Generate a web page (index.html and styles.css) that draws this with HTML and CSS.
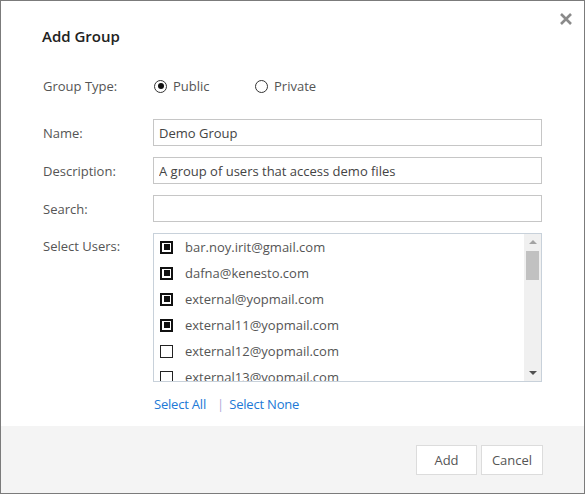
FILE: index.html
```html
<!DOCTYPE html>
<html lang="en">
<head>
    <meta charset="UTF-8">
    <title>Add Group</title>
    <link rel="stylesheet" href="styles.css">
</head>
<body>
    <div class="dialog">
        <button class="close" title="Close">
            <svg width="12" height="12" viewBox="0 0 12 12"><path d="M1 1L11 11M11 1L1 11" stroke="#8a8a8a" stroke-width="2.6" fill="none"/></svg>
        </button>

        <h2 class="title">Add Group</h2>

        <div class="form">
            <label class="lbl">Group Type:</label>
            <div class="radios">
                <span class="option"><span class="radio checked"></span>Public</span>
                <span class="option"><span class="radio"></span>Private</span>
            </div>

            <label class="lbl">Name:</label>
            <input class="field" type="text" value="Demo Group">

            <label class="lbl">Description:</label>
            <input class="field" type="text" value="A group of users that access demo files">

            <label class="lbl">Search:</label>
            <input class="field" type="text">

            <label class="lbl lbl-top">Select Users:</label>
            <div>
                <div class="users">
                    <ul class="user-list">
                        <li><span class="check checked"></span>bar.noy.irit@gmail.com</li>
                        <li><span class="check checked"></span>dafna@kenesto.com</li>
                        <li><span class="check checked"></span>external@yopmail.com</li>
                        <li><span class="check checked"></span>external11@yopmail.com</li>
                        <li><span class="check"></span>external12@yopmail.com</li>
                        <li><span class="check"></span>external13@yopmail.com</li>
                    </ul>
                    <div class="scrollbar">
                        <span class="arrow up"></span>
                        <span class="thumb"></span>
                        <span class="arrow down"></span>
                    </div>
                </div>
                <div class="select-links"><a href="#">Select All</a><span class="sep">|</span><a href="#">Select None</a></div>
            </div>
        </div>

        <div class="footer">
            <button class="btn btn-add">Add</button>
            <button class="btn">Cancel</button>
        </div>
    </div>
</body>
</html>
```

FILE: styles.css
```css
body {
    margin: 0;
    font-family: "Open Sans", "Liberation Sans", sans-serif;
    font-size: 13px;
    color: #555;
    background: #fff;
}
.dialog {
    position: relative;
    width: 585px;
    height: 494px;
    box-sizing: border-box;
    border: 1px solid #7b7b7b;
    background: #fff;
    display: flex;
    flex-direction: column;
}
.close {
    position: absolute;
    top: 12px;
    right: 12px;
    width: 12px;
    height: 12px;
    padding: 0;
    border: none;
    background: none;
    cursor: pointer;
    display: flex;
}
.title {
    margin: 25px 0 0 41px;
    font-size: 15px;
    font-weight: 600;
    line-height: 20px;
    color: #222;
}
.form {
    margin: 27px 42px 0 42px;
    display: grid;
    grid-template-columns: 110px 389px;
    row-gap: 11px;
    align-items: center;
}
.lbl {
    line-height: 18px;
    color: #555;
}
.lbl-top {
    align-self: start;
    line-height: 26px;
}
.radios {
    display: flex;
    height: 26px;
    align-items: center;
    margin-bottom: 9px;
}
.form > .lbl:first-child {
    margin-bottom: 9px;
}
.option {
    display: flex;
    align-items: center;
    width: 101px;
    color: #555;
}
.radio {
    width: 11px;
    height: 11px;
    border: 1px solid #333;
    border-radius: 50%;
    margin: 0 6px 0 1px;
    position: relative;
}
.radio.checked::after {
    content: "";
    position: absolute;
    left: 2.5px;
    top: 2.5px;
    width: 6px;
    height: 6px;
    border-radius: 50%;
    background: #111;
}
.field {
    height: 27px;
    box-sizing: border-box;
    border: 1px solid #c6c6c6;
    padding: 0 5px;
    font-family: inherit;
    font-size: 13px;
    color: #444;
    outline: none;
}
.users {
    display: flex;
    height: 149px;
    box-sizing: border-box;
    border: 1px solid #c8d1da;
}
.user-list {
    flex: 1;
    margin: 0;
    padding: 0;
    list-style: none;
    overflow: hidden;
}
.user-list li {
    display: flex;
    align-items: center;
    height: 26px;
    padding-left: 6px;
    color: #555;
    white-space: nowrap;
}
.check {
    width: 11px;
    height: 11px;
    border: 1px solid #222;
    margin-right: 12px;
    position: relative;
    flex: none;
}
.check.checked {
    width: 9px;
    height: 9px;
    border: 2px solid #111;
}
.check.checked::after {
    content: "";
    position: absolute;
    left: 1.5px;
    top: 1.5px;
    width: 6px;
    height: 6px;
    background: #111;
}
.scrollbar {
    width: 17px;
    background: #f0f0f0;
    display: flex;
    flex-direction: column;
    align-items: center;
}
.arrow {
    width: 0;
    height: 0;
    border-left: 4px solid transparent;
    border-right: 4px solid transparent;
}
.arrow.up {
    margin: 6px 0 7px;
    border-bottom: 4px solid #a3a3a3;
}
.arrow.down {
    margin: auto 0 6px;
    border-top: 4px solid #505050;
}
.thumb {
    width: 13px;
    height: 29px;
    background: #c1c1c1;
}
.select-links {
    margin-top: 13px;
    line-height: 18px;
    padding-left: 1px;
    display: flex;
}
.select-links a {
    color: #2179d6;
    text-decoration: none;
    letter-spacing: -0.2px;
}
.sep {
    color: #b0a8d8;
    margin: 0 5px 0 11px;
}
.footer {
    margin-top: auto;
    height: 67px;
    box-sizing: border-box;
    background: #f4f4f4;
    padding: 19px 41px 0 0;
    display: flex;
    justify-content: flex-end;
    align-items: flex-start;
    gap: 4px;
}
.btn {
    height: 30px;
    width: 62px;
    padding: 0;
    border: 1px solid #dcdcdc;
    background: #fff;
    font-family: inherit;
    font-size: 13px;
    color: #555;
    cursor: pointer;
}
.btn-add {
    width: 61px;
}
```
